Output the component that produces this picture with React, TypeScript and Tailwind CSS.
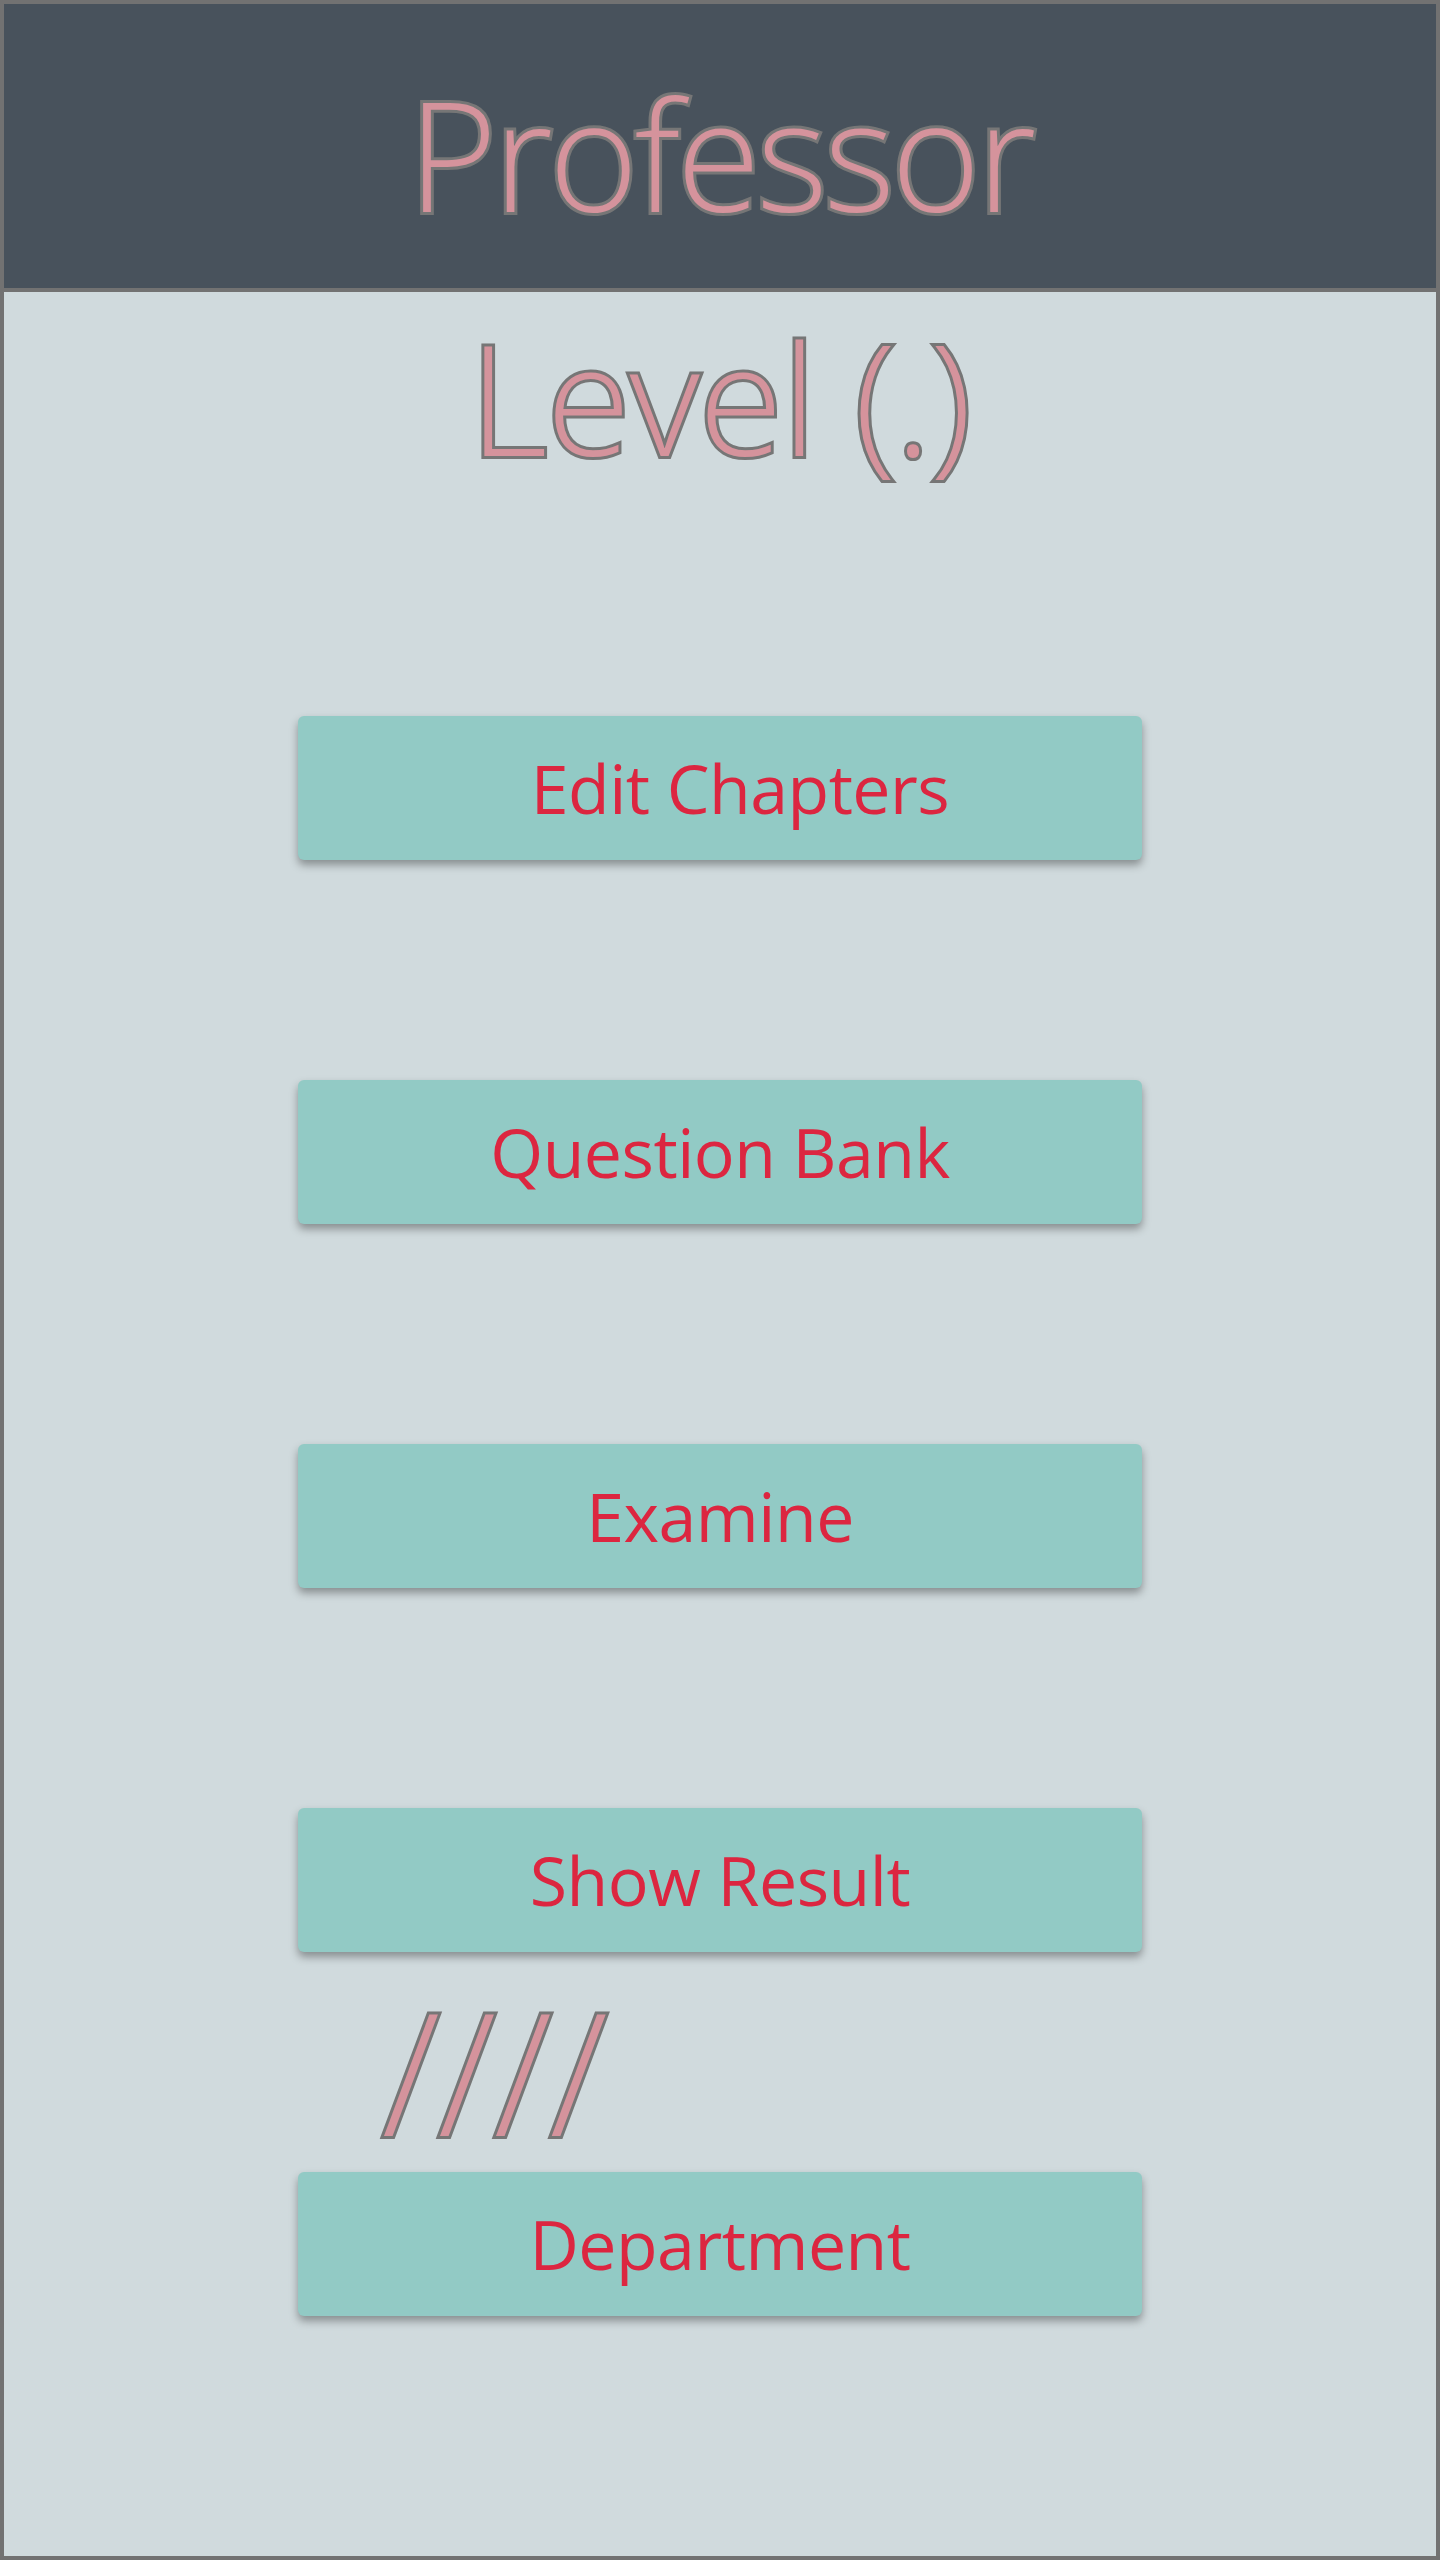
import React from 'react';

const outlined =
  "text-[#d5939c] [-webkit-text-stroke:6px_#767676] [paint-order:stroke_fill]";

const menu = ['Edit Chapters', 'Question Bank', 'Examine', 'Show Result'];

function MenuButton({ label, className = '' }: { label: string; className?: string }) {
  return (
    <button
      className={`w-[844px] h-[144px] rounded-[6px] bg-[#92cac5] shadow-[0_5px_8px_rgba(0,0,0,0.35)] flex items-center justify-center text-[68px] leading-none tracking-[-0.5px] text-[#dc2640] ${className}`}
    >
      {label}
    </button>
  );
}

export default function App() {
  return (
    <div className="w-[1440px] h-[2560px] border-4 border-[#727272] bg-[#d0dadd] flex flex-col font-['Open_Sans',sans-serif]">
      {/* Header */}
      <header className="h-[288px] shrink-0 bg-[#48525c] border-b-4 border-[#727272] flex justify-center pt-[72px]">
        <h1 className={`text-[153px] leading-none font-light tracking-[-4px] ${outlined}`}>Professor</h1>
      </header>

      {/* Content */}
      <main className="flex flex-col items-center pt-[28px]">
        <h2 className={`text-[153px] leading-none font-light tracking-[-1px] ${outlined}`}>Level (.)</h2>

        <div className="mt-[243px] flex flex-col gap-[220px]">
          {menu.map((item) => (
            <MenuButton key={item} label={item} className={item === 'Edit Chapters' ? 'pl-[40px]' : ''} />
          ))}
        </div>

        <div className={`w-[844px] mt-[33px] pl-[84px] text-[170px] leading-none font-light tracking-[-2px] ${outlined}`}>
          ////
        </div>

        <div className="mt-[17px]">
          <MenuButton label="Department" />
        </div>
      </main>
    </div>
  );
}
